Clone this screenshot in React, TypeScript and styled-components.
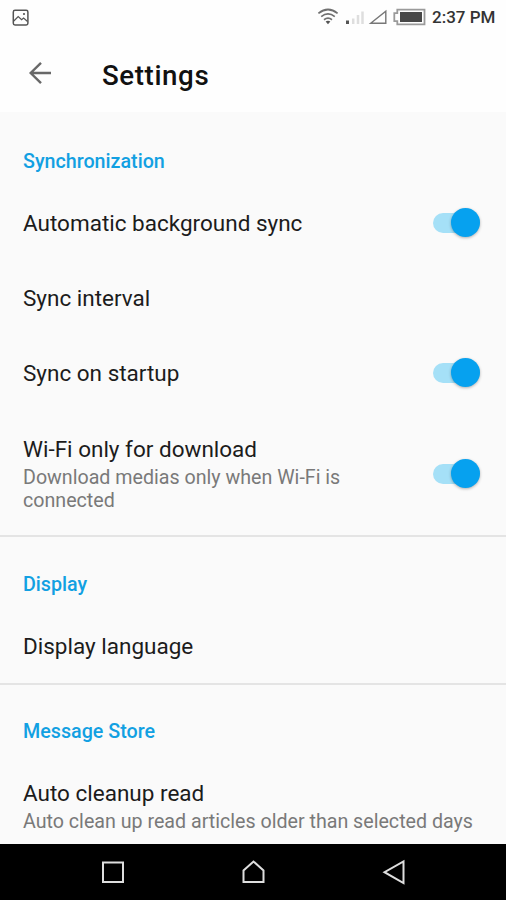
import React from "react";
import styled, { createGlobalStyle } from "styled-components";

const GlobalStyle = createGlobalStyle`
  * { box-sizing: border-box; }
  body { margin: 0; background: #fafafa; font-family: Roboto, sans-serif; }
`;

const Screen = styled.div`
  display: flex;
  flex-direction: column;
  width: 506px;
  height: 900px;
  overflow: hidden;
  background: #fafafa;
`;

const StatusBar = styled.div`
  display: flex;
  flex: none;
  align-items: center;
  justify-content: space-between;
  height: 34px;
  padding: 0 11px 0 12px;
  background: #fefefe;
`;

const StatusIcons = styled.div`
  display: flex;
  align-items: center;
`;

const Clock = styled.span`
  width: 63px;
  margin-left: 6px;
  font-size: 17px;
  font-weight: 500;
  line-height: 20px;
  white-space: nowrap;
  color: #333;
`;

const AppBar = styled.header`
  display: flex;
  flex: none;
  align-items: center;
  height: 78px;
  padding: 5px 28px 0;
  background: #fefefe;
`;

const BackButton = styled.button`
  display: flex;
  width: 74px;
  padding: 0 0 5px;
  border: 0;
  background: none;
`;

const Title = styled.h1`
  margin: 0;
  font-size: 27.7px;
  font-weight: 500;
  line-height: 32px;
  letter-spacing: 0.6px;
  color: #111;
`;

const Content = styled.main`
  flex: 1;
  min-height: 0;
  overflow: hidden;
`;

const Section = styled.section<{ $divided?: boolean }>`
  border-top: ${(p) => (p.$divided ? "2px solid #e4e4e4" : "0")};
`;

const SectionTitle = styled.h2<{ $height: number }>`
  display: flex;
  align-items: flex-end;
  height: ${(p) => p.$height}px;
  margin: 0;
  padding: 0 23px 11px;
  font-size: 19.7px;
  font-weight: 500;
  line-height: 24px;
  color: #12a0e2;
`;

const Row = styled.div<{ $height: number; $top?: number }>`
  display: flex;
  align-items: center;
  justify-content: space-between;
  height: ${(p) => p.$height}px;
  padding: ${(p) => p.$top ?? 0}px 26px 0 23px;
`;

const Label = styled.div`
  font-size: 22.5px;
  line-height: 28px;
  white-space: nowrap;
  color: #1c1c1c;
`;

const Summary = styled.div<{ $narrow?: boolean }>`
  width: ${(p) => (p.$narrow ? "360px" : "auto")};
  padding-top: 3px;
  font-size: 19.65px;
  line-height: 23px;
  color: #797979;
`;

const Track = styled.div`
  display: flex;
  flex: none;
  align-items: center;
  justify-content: flex-end;
  width: 47px;
  height: 20px;
  border-radius: 10px;
  background: #a5e0f7;
`;

const Thumb = styled.div`
  width: 29px;
  height: 29px;
  flex: none;
  border-radius: 50%;
  background: #06a1ef;
  box-shadow: 0 1px 3px rgba(0, 0, 0, 0.3);
`;

const NavBar = styled.nav`
  display: flex;
  flex: none;
  align-items: center;
  justify-content: space-between;
  height: 56px;
  padding: 0 98px;
  background: #000;
`;

const Switch = () => (
  <Track role="switch" aria-checked="true">
    <Thumb />
  </Track>
);

const PictureIcon = () => (
  <svg width="17" height="17" viewBox="0 0 17 17" fill="none" stroke="#555" strokeWidth="1.5">
    <rect x="1.3" y="1.3" width="14.6" height="14.6" rx="1.7" />
    <path d="M1.8 12 6.2 7.5 9.6 10.7 11.6 9 15.5 12.5" strokeWidth="1.2" />
    <circle cx="12" cy="5" r="0.5" strokeWidth="1.2" />
  </svg>
);

const SystemIcons = () => (
  <svg width="110" height="20" viewBox="0 0 110 20" fill="none">
    <g stroke="#707070" strokeWidth="1.7">
      <path d="M2.4 6.4Q12 -1.4 21.6 6.4" />
      <path d="M5.2 9.6Q12 4.2 18.8 9.6" />
      <path d="M8 12.7Q12 9.7 16 12.7" />
    </g>
    <path d="m9.6 14.5 2.4 2.8 2.4-2.8Q12 13 9.6 14.5Z" fill="#555" />
    <rect x="30" y="13.5" width="3" height="3.5" fill="#555" />
    <path d="M37.2 17V11.5M42 17V8M46.5 17V4.5" stroke="#dedede" strokeWidth="2.5" />
    <path d="M54.7 16.3 69.8 4.3V16.3Z" stroke="#777" strokeWidth="1.4" />
    <path d="M81.3 2.7H108.5V17.3H81.3V14.2H78.3V6.2H81.3Z" stroke="#9a9a9a" strokeWidth="1.8" />
    <rect x="84" y="5" width="22" height="10" fill="#484848" />
  </svg>
);

const BackArrow = () => (
  <svg width="24" height="24" viewBox="0 0 24 24" fill="none" stroke="#686868" strokeWidth="2.4">
    <path d="M23 12H2.7M13 1.8 2.7 12 13 22.2" />
  </svg>
);

const NavIcon = ({ d }: { d: string }) => (
  <svg width="28" height="28" viewBox="0 0 28 28" fill="none" stroke="#dedede" strokeWidth="2">
    <path d={d} />
  </svg>
);

export default function App() {
  return (
    <>
      <GlobalStyle />
      <Screen>
        <StatusBar>
          <PictureIcon />
          <StatusIcons>
            <SystemIcons />
            <Clock>2:37 PM</Clock>
          </StatusIcons>
        </StatusBar>
        <AppBar>
          <BackButton aria-label="Back">
            <BackArrow />
          </BackButton>
          <Title>Settings</Title>
        </AppBar>
        <Content>
          <Section>
            <SectionTitle $height={73}>Synchronization</SectionTitle>
            <Row $height={75}>
              <Label>Automatic background sync</Label>
              <Switch />
            </Row>
            <Row $height={75}>
              <Label>Sync interval</Label>
            </Row>
            <Row $height={75}>
              <Label>Sync on startup</Label>
              <Switch />
            </Row>
            <Row $height={125} $top={2}>
              <div>
                <Label>Wi-Fi only for download</Label>
                <Summary $narrow>Download medias only when Wi-Fi is connected</Summary>
              </div>
              <Switch />
            </Row>
          </Section>
          <Section $divided>
            <SectionTitle $height={71}>Display</SectionTitle>
            <Row $height={75}>
              <Label>Display language</Label>
            </Row>
          </Section>
          <Section $divided>
            <SectionTitle $height={70}>Message Store</SectionTitle>
            <Row $height={101}>
              <div>
                <Label>Auto cleanup read</Label>
                <Summary>Auto clean up read articles older than selected days</Summary>
              </div>
            </Row>
          </Section>
        </Content>
        <NavBar>
          <NavIcon d="M5 4.5H25V24H5Z" />
          <NavIcon d="M4.5 24V12.5L14.5 3.5 24.5 12.5V24Z" />
          <NavIcon d="M23.5 3.5V25L4.5 14.2Z" />
        </NavBar>
      </Screen>
    </>
  );
}
